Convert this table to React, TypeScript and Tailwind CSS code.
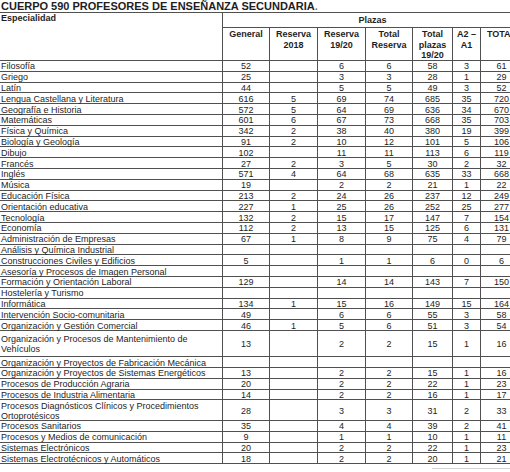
import React from 'react';

type Row = { name: string; v: string[]; h?: string };

const rows: Row[] = [
  { name: 'Filosofía', v: ['52', '', '6', '6', '58', '3', '61'] },
  { name: 'Griego', v: ['25', '', '3', '3', '28', '1', '29'] },
  { name: 'Latín', v: ['44', '', '5', '5', '49', '3', '52'] },
  { name: 'Lengua Castellana y Literatura', v: ['616', '5', '69', '74', '685', '35', '720'] },
  { name: 'Geografía e Historia', v: ['572', '5', '64', '69', '636', '34', '670'] },
  { name: 'Matemáticas', v: ['601', '6', '67', '73', '668', '35', '703'] },
  { name: 'Física y Química', v: ['342', '2', '38', '40', '380', '19', '399'] },
  { name: 'Biología y Geología', v: ['91', '2', '10', '12', '101', '5', '106'] },
  { name: 'Dibujo', v: ['102', '', '11', '11', '113', '6', '119'] },
  { name: 'Francés', v: ['27', '2', '3', '5', '30', '2', '32'] },
  { name: 'Inglés', v: ['571', '4', '64', '68', '635', '33', '668'] },
  { name: 'Música', v: ['19', '', '2', '2', '21', '1', '22'] },
  { name: 'Educación Física', v: ['213', '2', '24', '26', '237', '12', '249'] },
  { name: 'Orientación educativa', v: ['227', '1', '25', '26', '252', '25', '277'] },
  { name: 'Tecnología', v: ['132', '2', '15', '17', '147', '7', '154'] },
  { name: 'Economía', v: ['112', '2', '13', '15', '125', '6', '131'] },
  { name: 'Administración de Empresas', v: ['67', '1', '8', '9', '75', '4', '79'] },
  { name: 'Análisis y Química Industrial', v: ['', '', '', '', '', '', ''] },
  { name: 'Construcciones Civiles y Edificios', v: ['5', '', '1', '1', '6', '0', '6'] },
  { name: 'Asesoría y Procesos de Imagen Personal', v: ['', '', '', '', '', '', ''] },
  { name: 'Formación y Orientación Laboral', v: ['129', '', '14', '14', '143', '7', '150'] },
  { name: 'Hostelería y Turismo', v: ['', '', '', '', '', '', ''] },
  { name: 'Informática', v: ['134', '1', '15', '16', '149', '15', '164'] },
  { name: 'Intervención Socio-comunitaria', v: ['49', '', '6', '6', '55', '3', '58'] },
  { name: 'Organización y Gestión Comercial', v: ['46', '1', '5', '6', '51', '3', '54'] },
  { name: 'Organización y Procesos de Mantenimiento de Vehículos', v: ['13', '', '2', '2', '15', '1', '16'], h: 'h-[26.3px]' },
  { name: 'Organización y Proyectos de Fabricación Mecánica', v: ['', '', '', '', '', '', ''] },
  { name: 'Organización y Proyectos de Sistemas Energéticos', v: ['13', '', '2', '2', '15', '1', '16'] },
  { name: 'Procesos de Producción Agraria', v: ['20', '', '2', '2', '22', '1', '23'] },
  { name: 'Procesos de Industria Alimentaria', v: ['14', '', '2', '2', '16', '1', '17'] },
  { name: 'Procesos Diagnósticos Clínicos y Procedimientos Ortoprotésicos', v: ['28', '', '3', '3', '31', '2', '33'], h: 'h-[20.5px]' },
  { name: 'Procesos Sanitarios', v: ['35', '', '4', '4', '39', '2', '41'] },
  { name: 'Procesos y Medios de comunicación', v: ['9', '', '1', '1', '10', '1', '11'] },
  { name: 'Sistemas Electrónicos', v: ['20', '', '2', '2', '22', '1', '23'] },
  { name: 'Sistemas Electrotécnicos y Automáticos', v: ['18', '', '2', '2', '20', '1', '21'] },
];

const widths = ['w-[47px]', 'w-[48px]', 'w-[48px]', 'w-[47px]', 'w-[40px]', 'w-[28px]', 'w-[42px]'];
const heads = ['General', 'Reserva 2018', 'Reserva 19/20', 'Total Reserva', 'Total plazas 19/20', 'A2 – A1', 'TOTAL'];

export default function App() {
  return (
    <div className="w-[510px] h-[472px] overflow-hidden bg-white text-[#1e1e1e] font-['Liberation_Sans',Arial,sans-serif]">
      <div className="h-[12px] pl-[1px] text-[11px] leading-[12px] font-bold whitespace-nowrap">
        CUERPO 590 PROFESORES DE ENSEÑANZA SECUNDARIA<span className="text-[#777]">.</span>
      </div>
      <div className="w-[522px] text-[9px]">
        <div className="flex h-[49px] border-t border-b border-[#505050]">
          <div className="w-[223px] shrink-0 border-r border-[#505050] pl-[1px] font-bold leading-[10.5px]">
            Especialidad
          </div>
          <div className="flex flex-col w-[299px] shrink-0">
            <div className="h-[15px] shrink-0 border-b border-[#505050] flex items-center justify-center font-bold leading-[10.5px]">
              Plazas
            </div>
            <div className="flex flex-1">
              {heads.map((h, i) => (
                <div
                  key={h}
                  className={`${widths[i]} shrink-0 border-r border-[#505050] text-center font-bold leading-[10.5px] pt-[1px] px-[1px]`}
                >
                  {h}
                </div>
              ))}
            </div>
          </div>
        </div>
        {rows.map((r) => (
          <div key={r.name} className={`flex ${r.h ?? 'h-[10.8px]'} border-b border-[#505050]`}>
            <div className="w-[223px] shrink-0 border-r border-[#505050] pl-[1px] pt-[1px] flex items-center leading-[10px]">
              {r.name}
            </div>
            {r.v.map((v, i) => (
              <div
                key={i}
                className={`${widths[i]} shrink-0 border-r border-[#505050] pt-[1px] flex items-center justify-center leading-[10px]`}
              >
                {v}
              </div>
            ))}
          </div>
        ))}
        <div className="ml-[432px] mt-[4px] w-[78px] h-px bg-[#d4d4d4]" />
      </div>
    </div>
  );
}
